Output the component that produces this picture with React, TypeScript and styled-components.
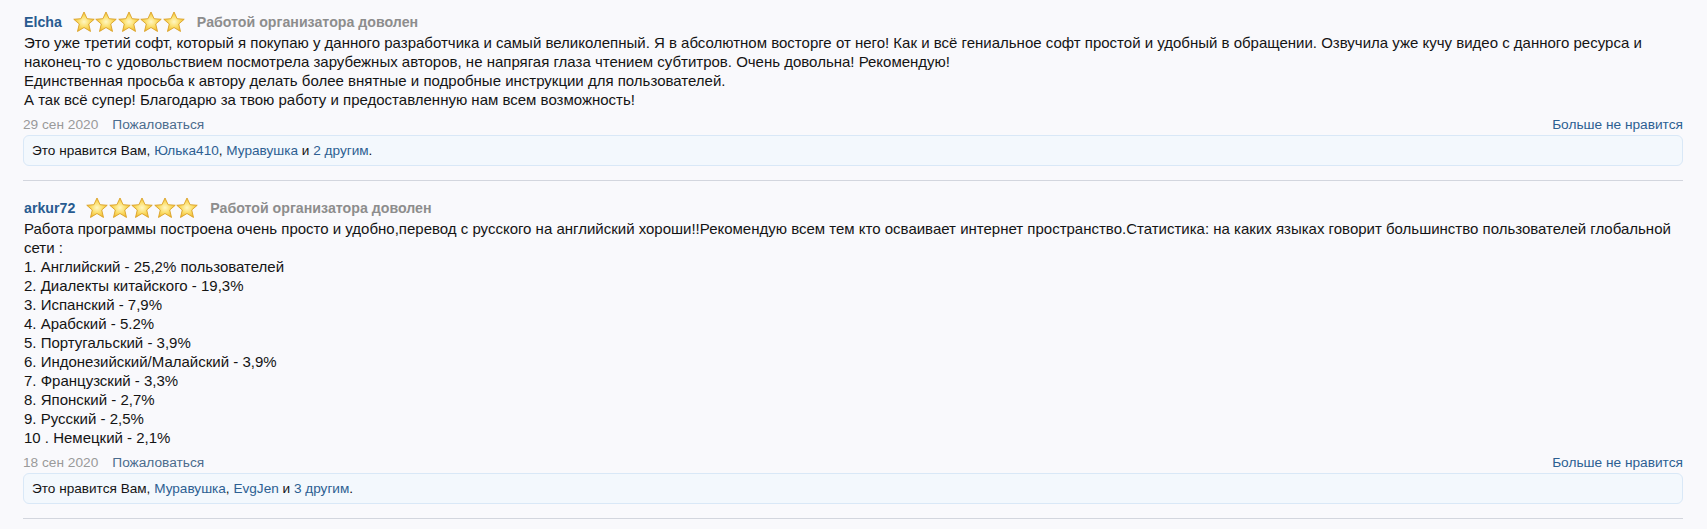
import styled, { createGlobalStyle } from "styled-components";

const GlobalStyle = createGlobalStyle`
  html, body {
    margin: 0;
    padding: 0;
    background: #f9f9fc;
  }
  body {
    font-family: "Liberation Sans", Arial, sans-serif;
    color: #141414;
  }
`;

const Page = styled.div`
  width: 1660px;
  padding: 11px 0 0 23px;
`;

const Review = styled.div`
  padding-bottom: 14px;
  border-bottom: 1px solid #d3d6de;
  margin-bottom: 16px;
`;

const Header = styled.div`
  display: flex;
  align-items: center;
  height: 22px;
  padding-left: 1px;
`;

const Author = styled.a`
  font-size: 14.2px;
  font-weight: 700;
  color: #285b90;
  text-decoration: none;
`;

const Stars = styled.span`
  display: inline-flex;
  margin-left: 11px;
  gap: 0.5px;
`;

const Verdict = styled.span`
  margin-left: 12px;
  font-size: 14.2px;
  font-weight: 700;
  color: #8d8d8d;
`;

const Body = styled.div`
  font-size: 15px;
  line-height: 19px;
  white-space: pre-line;
  padding-left: 1px;
`;

const Meta = styled.div`
  display: flex;
  align-items: center;
  justify-content: space-between;
  font-size: 13.7px;
  margin-top: 7px;
  height: 16px;
`;

const MetaLeft = styled.div`
  display: flex;
  gap: 14px;
`;

const Date = styled.span`
  color: #9a9a9a;
`;

const Link = styled.a<{ $tone?: "dark" | "muted" }>`
  color: ${(p) => (p.$tone === "muted" ? "#4b6c8e" : "#2d5f92")};
  text-decoration: none;
`;

const Likes = styled.div`
  margin-top: 3px;
  border: 1px solid #d9e8f7;
  background: #f3f8fd;
  border-radius: 6px;
  font-size: 13.6px;
  padding: 0 8px;
  height: 29px;
  display: flex;
  align-items: center;
`;

const Star = ({ id }: { id: string }) => (
  <svg width="22" height="22" viewBox="0 0 20 20">
    <defs>
      <radialGradient id={id} cx="50%" cy="50%" r="55%">
        <stop offset="0%" stopColor="#fff7c4" />
        <stop offset="50%" stopColor="#fbde6a" />
        <stop offset="100%" stopColor="#f0b62a" />
      </radialGradient>
    </defs>
    <path
      d="M10 0.9 L12.8 7 L19.3 7.5 L14.3 11.8 L15.9 18.6 L10 15 L4.1 18.6 L5.7 11.8 L0.7 7.5 L7.2 7 Z"
      fill={`url(#${id})`}
      stroke="#d99f22"
      strokeWidth="0.8"
      strokeLinejoin="round"
    />
  </svg>
);

type ReviewData = {
  author: string;
  date: string;
  text: string;
  likers: string[];
  others: number;
};

const reviews: ReviewData[] = [
  {
    author: "Elcha",
    date: "29 сен 2020",
    text:
      "Это уже третий софт, который я покупаю у данного разработчика и самый великолепный. Я в абсолютном восторге от него! Как и всё гениальное софт простой и удобный в обращении. Озвучила уже кучу видео с данного ресурса и наконец-то с удовольствием посмотрела зарубежных авторов, не напрягая глаза чтением субтитров. Очень довольна! Рекомендую!\nЕдинственная просьба к автору делать более внятные и подробные инструкции для пользователей.\nА так всё супер! Благодарю за твою работу и предоставленную нам всем возможность!",
    likers: ["Юлька410", "Муравушка"],
    others: 2,
  },
  {
    author: "arkur72",
    date: "18 сен 2020",
    text:
      "Работа программы построена очень просто и удобно,перевод с русского на английский хороши!!Рекомендую всем тем кто осваивает интернет пространство.Статистика: на каких языках говорит большинство пользователей глобальной сети :\n1. Английский - 25,2% пользователей\n2. Диалекты китайского - 19,3%\n3. Испанский - 7,9%\n4. Арабский - 5.2%\n5. Португальский - 3,9%\n6. Индонезийский/Малайский - 3,9%\n7. Французский - 3,3%\n8. Японский - 2,7%\n9. Русский - 2,5%\n10 . Немецкий - 2,1%",
    likers: ["Муравушка", "EvgJen"],
    others: 3,
  },
];

export default function App() {
  return (
    <>
      <GlobalStyle />
      <Page>
        {reviews.map((r, ri) => (
          <Review key={r.author}>
            <Header>
              <Author href="#">{r.author}</Author>
              <Stars>
                {[0, 1, 2, 3, 4].map((i) => (
                  <Star key={i} id={`g${ri}${i}`} />
                ))}
              </Stars>
              <Verdict>Работой организатора доволен</Verdict>
            </Header>
            <Body>{r.text}</Body>
            <Meta>
              <MetaLeft>
                <Date>{r.date}</Date>
                <Link href="#" $tone="muted">
                  Пожаловаться
                </Link>
              </MetaLeft>
              <Link href="#">Больше не нравится</Link>
            </Meta>
            <Likes>
              <span>
                Это нравится Вам,{" "}
                <Link href="#">{r.likers[0]}</Link>,{" "}
                <Link href="#">{r.likers[1]}</Link> и{" "}
                <Link href="#">{r.others} другим</Link>.
              </span>
            </Likes>
          </Review>
        ))}
      </Page>
    </>
  );
}
